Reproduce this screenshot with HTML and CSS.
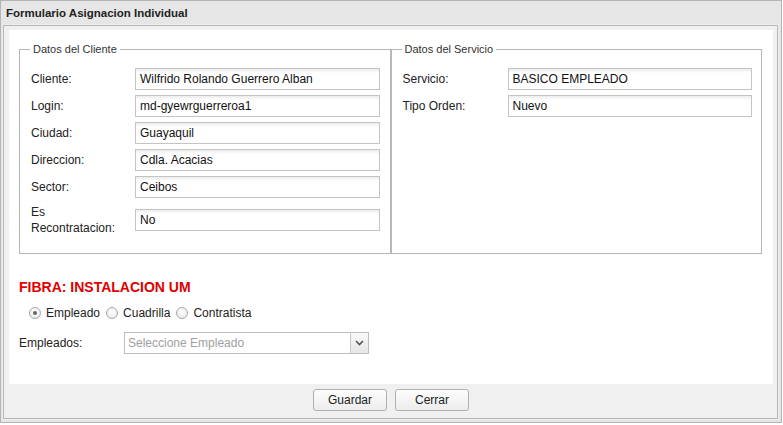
FILE: index.html
```html
<!DOCTYPE html>
<html>
<head>
<meta charset="utf-8">
<link rel="stylesheet" href="styles.css">
</head>
<body>
<div class="window">
  <div class="title">Formulario Asignacion Individual</div>
  <div class="panel">
    <div class="body">
      <div class="sets">
        <fieldset class="set">
          <legend>Datos del Cliente</legend>
          <div class="row"><label>Cliente:</label><div class="field">Wilfrido Rolando Guerrero Alban</div></div>
          <div class="row"><label>Login:</label><div class="field">md-gyewrguerreroa1</div></div>
          <div class="row"><label>Ciudad:</label><div class="field">Guayaquil</div></div>
          <div class="row"><label>Direccion:</label><div class="field">Cdla. Acacias</div></div>
          <div class="row"><label>Sector:</label><div class="field">Ceibos</div></div>
          <div class="row tall"><label>Es<br>Recontratacion:</label><div class="field">No</div></div>
        </fieldset>
        <fieldset class="set">
          <legend>Datos del Servicio</legend>
          <div class="row"><label>Servicio:</label><div class="field">BASICO EMPLEADO</div></div>
          <div class="row"><label>Tipo Orden:</label><div class="field">Nuevo</div></div>
        </fieldset>
      </div>
      <div class="heading">FIBRA: INSTALACION UM</div>
      <div class="radios">
        <span class="radio on"></span><span class="rlabel">Empleado</span>
        <span class="radio"></span><span class="rlabel">Cuadrilla</span>
        <span class="radio"></span><span class="rlabel">Contratista</span>
      </div>
      <div class="combo-row">
        <label>Empleados:</label>
        <div class="combo">
          <span class="placeholder">Seleccione Empleado</span>
          <span class="trigger"><svg width="9" height="6" viewBox="0 0 9 6"><path d="M1 1 L4.5 4.5 L8 1" fill="none" stroke="#555" stroke-width="1.6"/></svg></span>
        </div>
      </div>
    </div>
    <div class="footer">
      <button class="btn">Guardar</button>
      <button class="btn">Cerrar</button>
    </div>
  </div>
</div>
</body>
</html>
```
FILE: styles.css
```css
html, body {
  margin: 0;
  padding: 0;
  background: #ffffff;
}
body {
  font-family: "Liberation Sans", Arial, sans-serif;
  font-size: 12px;
  color: #000;
}
.window {
  width: 782px;
  height: 423px;
  border: 1px solid #b4b4b4;
  background: #e6e6e6;
  padding: 0 3px 3px 2px;
  box-sizing: border-box;
}
.title {
  height: 24px;
  line-height: 25px;
  padding-left: 3px;
  font-weight: bold;
  font-size: 11.5px;
  color: #222;
}
.panel {
  border: 1px solid #b8b8b8;
  background: #f0f0f0;
  padding: 4px 4px 0 5px;
  height: 394px;
  box-sizing: border-box;
  outline: 1px solid #ececec;
}
.body {
  background: #fff;
  height: 354px;
  padding: 13px 11px 0 10px;
  box-sizing: border-box;
}
.sets {
  display: flex;
}
.set {
  width: 372px;
  height: 211px;
  margin: 0;
  padding: 13px 0 0 11px;
  box-sizing: border-box;
  border: 1px solid #b7b7b7;
}
.set legend {
  font-size: 11px;
  color: #333;
  padding: 0 3px;
  margin-left: -1px;
}
.row {
  display: flex;
  align-items: center;
  height: 22px;
  margin-bottom: 5px;
}
.row.tall {
  height: 33px;
  margin-top: 1px;
}
.row label {
  width: 104px;
  flex: none;
  line-height: 16px;
  color: #222;
}
.field {
  width: 245px;
  height: 22px;
  box-sizing: border-box;
  border: 1px solid #c4c4c4;
  background: linear-gradient(#ececec 0, #fff 4px, #fff 100%);
  padding: 0 4px;
  line-height: 20px;
  color: #111;
}
.set + .set .field {
  width: 244px;
}
.set + .set .row label {
  width: 105px;
}
.heading {
  margin-top: 25px;
  color: #e00000;
  font-weight: bold;
  font-size: 14px;
  height: 18px;
}
.radios {
  display: flex;
  align-items: center;
  margin-top: 8px;
  padding-left: 10px;
  height: 16px;
}
.radio {
  width: 10px;
  height: 10px;
  border-radius: 50%;
  border: 1px solid #a8a8a8;
  background: radial-gradient(circle at 50% 40%, #fff 0, #e4e4e4 100%);
  position: relative;
  margin-right: 5px;
}
.radio.on::after {
  content: "";
  position: absolute;
  left: 3px;
  top: 3px;
  width: 4px;
  height: 4px;
  border-radius: 50%;
  background: #666;
}
.rlabel {
  margin-right: 6px;
  color: #222;
}
.combo-row {
  display: flex;
  align-items: center;
  margin-top: 11px;
}
.combo-row label {
  width: 105px;
  color: #222;
}
.combo {
  width: 245px;
  height: 22px;
  box-sizing: border-box;
  border: 1px solid #bdbdbd;
  display: flex;
  align-items: center;
  background: #fff;
}
.placeholder {
  flex: 1;
  padding-left: 3px;
  color: #a0a0a0;
}
.trigger {
  width: 17px;
  height: 20px;
  border-left: 1px solid #c8c8c8;
  background: linear-gradient(#fafafa, #e6e6e6);
  display: flex;
  align-items: center;
  justify-content: center;
}
.footer {
  display: flex;
  justify-content: center;
  gap: 8px;
  padding-top: 5px;
}
.btn {
  width: 74px;
  height: 22px;
  border: 1px solid #b0b0b0;
  border-radius: 3px;
  background: linear-gradient(#fdfdfd, #ececec);
  font-family: "Liberation Sans", Arial, sans-serif;
  font-size: 12px;
  color: #222;
  padding: 0;
}
```
